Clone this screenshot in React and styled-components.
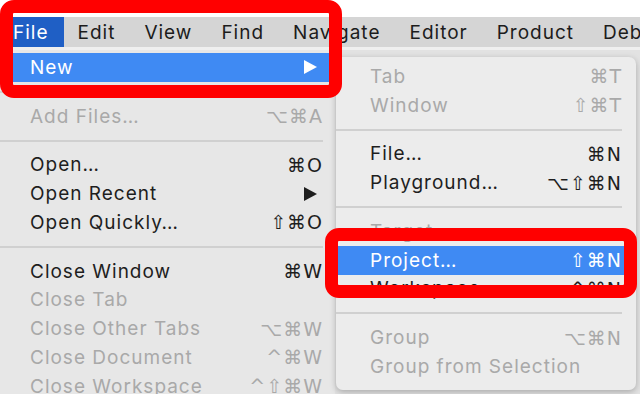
import React from 'react'
import styled, { createGlobalStyle } from 'styled-components'

const GlobalStyle = createGlobalStyle`
  body {
    margin: 0;
    background: #ffffff;
    font-family: Inter, "Liberation Sans", "DejaVu Sans", sans-serif;
  }
`

const fileMenu = [
  { label: 'New', arrow: true, active: true },
  { sep: true },
  { label: 'Add Files…', keys: '⌥⌘A', disabled: true },
  { sep: true },
  { label: 'Open…', keys: '⌘O' },
  { label: 'Open Recent', arrow: true },
  { label: 'Open Quickly…', keys: '⇧⌘O' },
  { sep: true },
  { label: 'Close Window', keys: '⌘W' },
  { label: 'Close Tab', disabled: true },
  { label: 'Close Other Tabs', keys: '⌥⌘W', disabled: true },
  { label: 'Close Document', keys: '^⌘W', disabled: true },
  { label: 'Close Workspace', keys: '^⇧⌘W', disabled: true },
]

const newMenu = [
  { label: 'Tab', keys: '⌘T', disabled: true },
  { label: 'Window', keys: '⇧⌘T', disabled: true },
  { sep: true },
  { label: 'File…', keys: '⌘N' },
  { label: 'Playground…', keys: '⌥⇧⌘N' },
  { sep: true },
  { label: 'Target…', disabled: true },
  { label: 'Project…', keys: '⇧⌘N', active: true },
  { label: 'Workspace…', keys: '^⌘N' },
  { sep: true },
  { label: 'Group', keys: '⌥⌘N', disabled: true },
  { label: 'Group from Selection', disabled: true },
]

const titles = ['File', 'Edit', 'View', 'Find', 'Navigate', 'Editor', 'Product', 'Debug']

const Arrow = ({ color }) => (
  <svg width="13" height="14" viewBox="0 0 13 14">
    <polygon points="0,0 13,7 0,14" fill={color} />
  </svg>
)

const MenuItems = ({ items, indent }) =>
  items.map((item, i) =>
    item.sep ? (
      <Separator key={i} />
    ) : (
      <Row key={i} $active={item.active} $disabled={item.disabled} $indent={indent}>
        <span>{item.label}</span>
        {item.keys && <Keys>{item.keys}</Keys>}
        {item.arrow && <Arrow color={item.active ? '#ffffff' : '#1e1e1e'} />}
      </Row>
    )
  )

const App = () => {
  return (
    <>
      <GlobalStyle />
      <Screen>
        <TopStrip />
        <MenuBar>
          {titles.map((t, i) => (
            <MenuTitle key={t} $active={i === 0}>{t}</MenuTitle>
          ))}
        </MenuBar>
        <Desk>
          <FileMenu>
            <MenuItems items={fileMenu} indent={30} />
          </FileMenu>
          <SubMenu>
            <MenuItems items={newMenu} indent={34} />
          </SubMenu>
        </Desk>
        <Callout $left={0} $top={0} $width={342} $height={98} />
        <Callout $left={325} $top={228} $width={312} $height={70} />
      </Screen>
    </>
  )
}

const Screen = styled.div`
  position: relative;
  width: 640px;
  height: 394px;
  overflow: hidden;
  display: flex;
  flex-direction: column;
  background: #ffffff;
`

const TopStrip = styled.div`
  height: 17px;
  flex-shrink: 0;
`

const MenuBar = styled.div`
  height: 30px;
  flex-shrink: 0;
  display: flex;
  background: #d5d5d5;
  border-bottom: 3px solid #efefef;
`

const MenuTitle = styled.div`
  display: flex;
  align-items: center;
  padding: 0 15px 0 ${(p) => (p.$active ? '13px' : '14px')};
  font-size: 19px;
  letter-spacing: 1px;
  white-space: nowrap;
  color: ${(p) => (p.$active ? '#ffffff' : '#1c1c1c')};
  background: ${(p) => (p.$active ? '#1f5fc5' : 'transparent')};
`

const Desk = styled.div`
  position: relative;
  flex: 1;
  background: #e2e2e2;
`

const FileMenu = styled.div`
  width: 335px;
  height: 100%;
  padding: 3px 12px 0 0;
  box-sizing: border-box;
  background: #e7e7e7;
`

const SubMenu = styled.div`
  position: absolute;
  left: 336px;
  top: 7px;
  width: 300px;
  padding: 5px 14px 9px 0;
  box-sizing: border-box;
  background: #ececec;
  border-radius: 0 7px 7px 7px;
  box-shadow: -1px 0 0 #c9c9c9, 0 2px 6px rgba(0, 0, 0, 0.25);
`

const Row = styled.div`
  height: 28.75px;
  display: flex;
  align-items: center;
  justify-content: space-between;
  padding-left: ${(p) => p.$indent}px;
  margin-right: ${(p) => (p.$active ? '-14px' : '0')};
  padding-right: ${(p) => (p.$active ? '14px' : '0')};
  font-size: 19px;
  letter-spacing: 1px;
  white-space: nowrap;
  color: ${(p) => (p.$active ? '#ffffff' : p.$disabled ? '#a9a9a9' : '#1e1e1e')};
  background: ${(p) => (p.$active ? '#3f8af3' : 'transparent')};

  & > svg {
    margin-right: 6px;
  }
`

const Keys = styled.span`
  font-family: "DejaVu Sans", Inter, sans-serif;
  font-size: 19px;
  letter-spacing: 1px;
`

const Separator = styled.div`
  height: 20px;
  display: flex;
  align-items: center;

  &::after {
    content: '';
    flex: 1;
    height: 2px;
    background: #d0d0d0;
  }
`

const Callout = styled.div`
  position: absolute;
  left: ${(p) => p.$left}px;
  top: ${(p) => p.$top}px;
  width: ${(p) => p.$width}px;
  height: ${(p) => p.$height}px;
  box-sizing: border-box;
  border: 13px solid #ff0000;
  border-radius: 14px;
`

export default App
